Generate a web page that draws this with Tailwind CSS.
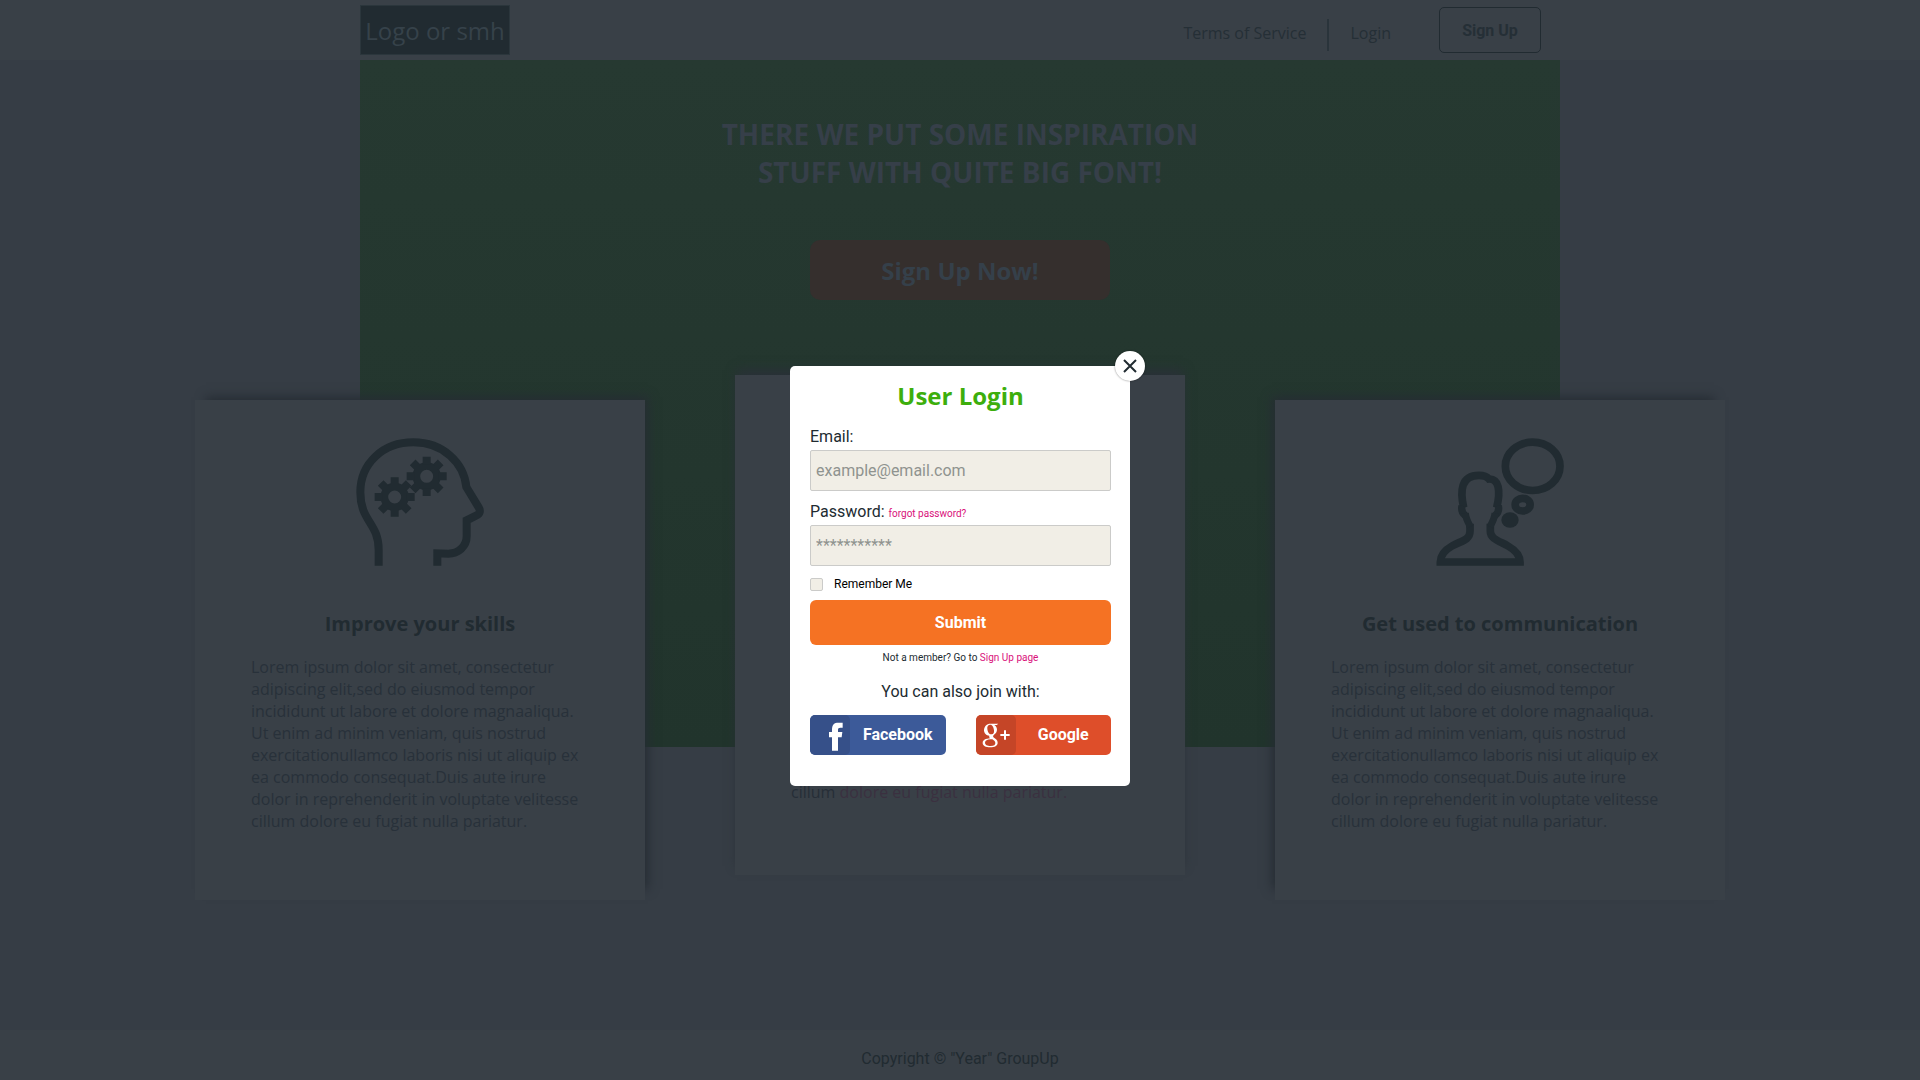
<!DOCTYPE html>
<html lang="en">
<head>
<meta charset="utf-8">
<title>GroupUp</title>
<script src="https://cdn.jsdelivr.net/npm/@tailwindcss/browser@4"></script>
</head>
<body class="relative flex min-h-screen flex-col bg-[#363d45] font-['Open_Sans',sans-serif] text-base text-[#212b31]">

<header class="h-[60px] bg-[#394047]">
  <div class="mx-auto flex h-full max-w-[1200px] items-start justify-between">
    <a href="#" class="mt-[5px] flex h-[50px] w-[150px] items-center justify-center border border-[#2b363c] bg-[#212b31] pt-px text-2xl text-[#36424a]">Logo or smh</a>
    <nav class="flex items-start pr-[19px] text-[#252f36]">
      <a href="#" class="mt-[21px]">Terms of Service</a>
      <span class="mx-[21px] mt-[19px] h-8 w-[2px] bg-[#2a343b]"></span>
      <a href="#" class="mt-[21px]">Login</a>
      <button class="mt-[7px] ml-12 h-[46px] w-[102px] rounded-[5px] border border-[#212b31] pt-px font-['Roboto',sans-serif] font-bold">Sign Up</button>
    </nav>
  </div>
</header>

<main class="flex-1">
  <section class="mx-auto flex h-[687px] max-w-[1200px] flex-col items-center bg-linear-to-b from-[#263931] to-[#21342c] pt-[55px]">
    <h1 class="text-center text-[28px] leading-[38px] font-bold text-[#363f49]">THERE WE PUT SOME INSPIRATION<br>STUFF WITH QUITE BIG FONT!</h1>
    <button class="mt-[49px] h-[60px] w-[300px] rounded-[10px] bg-[#352f2d] pt-[2px] text-2xl font-bold text-[#35404a]">Sign Up Now!</button>
  </section>

  <section class="-mt-[372px] flex justify-center gap-[90px] pb-10">
    <article class="mt-[25px] flex h-[500px] w-[450px] flex-col items-center bg-[#394047] pt-[38px] shadow-[7px_-7px_10px_-4px_#262d34]">
      <svg class="size-32" viewBox="528 175 384 384" fill="none" stroke="#212b31" stroke-width="24">
        <defs>
          <g id="gear">
            <circle r="31" stroke-width="23"/>
            <path d="M0-36V-59M0 36V59M-36 0H-60M36 0H60M-27-27L-42-42M27-27L42-42M-27 27L-42 42M27 27L42 42"/>
          </g>
        </defs>
        <path d="M596 558V510C596 430 541 425 541 338C541 250 610 188 700 188C790 188 852 250 859 322L896 383C903 395 899 403 888 408L860 422V470C860 500 835 522 805 522L772 521V558"/>
        <use href="#gear" x="740" y="290"/>
        <use href="#gear" x="644" y="352"/>
      </svg>
      <h2 class="mt-11 text-xl font-bold">Improve your skills</h2>
      <p class="mt-[18px] w-[338px] leading-[22px] text-[#28313a]">Lorem ipsum dolor sit amet, consectetur<br>adipiscing elit,sed do eiusmod tempor<br>incididunt ut labore et dolore magnaaliqua.<br>Ut enim ad minim veniam, quis nostrud<br>exercitationullamco laboris nisi ut aliquip ex<br>ea commodo consequat.Duis aute irure<br>dolor in reprehenderit in voluptate velitesse<br>cillum dolore eu fugiat nulla pariatur.</p>
    </article>

    <article class="flex h-[500px] w-[450px] flex-col items-center justify-end bg-[#394047] pb-[72px] shadow-[0_-7px_10px_-2px_#2a3138]">
      <p class="w-[338px] leading-[22px] text-[#262e37]">cillum <span class="text-[#3b3040]">dolore eu fugiat nulla pariatur.</span></p>
    </article>

    <article class="mt-[25px] flex h-[500px] w-[450px] flex-col items-center bg-[#394047] pt-[38px] shadow-[-7px_-7px_10px_-4px_#262d34]">
      <svg class="size-32" viewBox="528 175 384 384" fill="none" stroke="#212b31" stroke-width="23">
        <ellipse cx="818" cy="260" rx="82" ry="72.500"/>
        <ellipse cx="788" cy="375" rx="22.500" ry="19"/>
        <ellipse cx="750" cy="421" rx="26" ry="23" fill="#212b31" stroke="none"/>
        <path d="M630 432V455C630 482 602 484 576 499C553 512 541 525 541 547H780C780 525 767 512 744 499C718 484 691 478 691 455V432"/>
        <path d="M611 384C600 335 602 287 657 287C673 287 680 290 687 298C716 297 723 332 710 384"/>
        <path d="M606 378C603 392 608 402 616 408" stroke-width="22"/>
        <path d="M715 378C718 392 713 402 705 408" stroke-width="22"/>
        <path d="M616 400C617 416 624 428 631 441M705 400C704 416 697 428 690 441" stroke-width="21"/>
      </svg>
      <h2 class="mt-11 text-xl font-bold">Get used to communication</h2>
      <p class="mt-[18px] w-[338px] leading-[22px] text-[#28313a]">Lorem ipsum dolor sit amet, consectetur<br>adipiscing elit,sed do eiusmod tempor<br>incididunt ut labore et dolore magnaaliqua.<br>Ut enim ad minim veniam, quis nostrud<br>exercitationullamco laboris nisi ut aliquip ex<br>ea commodo consequat.Duis aute irure<br>dolor in reprehenderit in voluptate velitesse<br>cillum dolore eu fugiat nulla pariatur.</p>
    </article>
  </section>
</main>

<footer class="flex h-[50px] items-center justify-center bg-[#394047] pt-[7px] font-['Roboto',sans-serif]">Copyright © "Year" GroupUp</footer>

<!-- Login dialog -->
<div role="dialog" aria-labelledby="login-title" class="absolute top-[366px] left-1/2 w-[340px] -translate-x-1/2 rounded-[5px] bg-white pr-[19px] pb-[31px] pl-5 font-['Roboto',sans-serif]">
  <button aria-label="Close" class="absolute -top-[15px] -right-[15px] flex size-[30px] items-center justify-center rounded-full bg-white shadow-[0_0_2px_#00000080]">
    <svg class="size-[14px]" viewBox="0 0 14 14" stroke="#212b31" stroke-width="2"><path d="M1 1L13 13M13 1L1 13"/></svg>
  </button>
  <h2 id="login-title" class="pt-[14px] text-center font-['Open_Sans',sans-serif] text-2xl font-bold text-[#3dae0c]">User Login</h2>
  <form>
    <label for="email" class="mt-[15px] block leading-5">Email:</label>
    <input id="email" type="email" placeholder="example@email.com" class="mt-[3px] block h-[41px] w-full rounded-[2px] border border-[#cbcbc9] bg-[#f1eee6] px-[5px] placeholder:text-[#8f938f]">
    <div class="mt-[11px] flex items-baseline gap-1 leading-5">
      <label for="password">Password:</label>
      <a href="#" class="text-[10px] text-[#d9107a]">forgot password?</a>
    </div>
    <input id="password" type="password" placeholder="***********" class="mt-px block h-[41px] w-full rounded-[2px] border border-[#cbcbc9] bg-[#f1eee6] px-[5px] placeholder:text-[#8f938f]">
    <div class="mt-[10px] flex h-4 items-center gap-[11px]">
      <input id="remember" type="checkbox" class="size-[13px] appearance-none rounded-[2px] border border-[#cbcbc9] bg-[#f1eee6]">
      <label for="remember" class="text-xs text-black">Remember Me</label>
    </div>
    <button class="mt-2 h-[45px] w-full rounded-md bg-[#f57223] pt-px font-bold text-white">Submit</button>
  </form>
  <p class="mt-[5px] text-center text-[10px] leading-4">Not a member? Go to <a href="#" class="text-[#d9107a]">Sign Up page</a></p>
  <p class="mt-4 text-center leading-5">You can also join with:</p>
  <div class="mt-[13px] grid grid-cols-2 gap-[30px] font-bold text-white">
    <button class="flex h-10 overflow-hidden rounded-[5px] bg-[#3c5a99]">
      <svg class="size-10 rounded-[5px] bg-[#365089]" viewBox="0 0 120 120" fill="#fff"><path d="M66 107V67H57V51H66V44C66 28 73 23 85 23H98V38H91C86 38 84 40 84 45V51H97L95 67H84V107Z"/></svg>
      <span class="flex-1 self-center">Facebook</span>
    </button>
    <button class="flex h-10 overflow-hidden rounded-[5px] bg-[#de4e2a]">
      <svg class="size-10 rounded-[5px] bg-[#c54527]" viewBox="0 0 120 120" fill="none" stroke="#fff">
        <path fill="#fff" fill-rule="evenodd" stroke="none" d="M43 26H67L62 30H55C61 34 63 39 63 44C63 51 59 55 54 59C51 62 50 65 54 68C60 72 65 75 65 83C65 92 56 97 43 97C29 97 20 92 20 84C20 75 29 71 42 70C40 68 39 65 40 62C31 62 24 55 24 46C24 34 33 26 43 26ZM43 29C36 29 33 34 34 42C35 51 40 59 47 58C53 58 55 53 54 46C53 37 49 29 43 29ZM44 73C34 73 27 77 27 83C27 89 34 93 44 93C54 93 58 90 58 84C58 79 53 76 49 73Z"/>
        <path stroke-width="6" d="M73 60H101M87 46V74"/>
      </svg>
      <span class="flex-1 self-center">Google</span>
    </button>
  </div>
</div>
</body>
</html>
